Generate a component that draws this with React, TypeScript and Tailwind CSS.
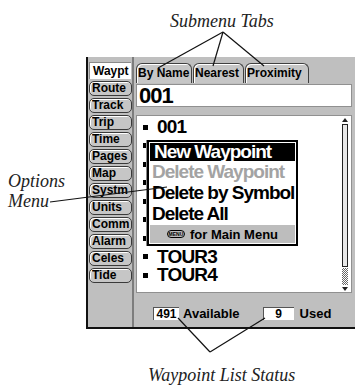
import React from 'react'

const sideTabs = ['Route', 'Track', 'Trip', 'Time', 'Pages', 'Map', 'Systm', 'Units', 'Comm', 'Alarm', 'Celes', 'Tide']

const topTabs = [
  { label: 'By Name', w: 'w-[56px]' },
  { label: 'Nearest', w: 'w-[51px]' },
  { label: 'Proximity', w: 'w-[64px]' },
]

// rows 1-6 sit under the options menu, only their bullets show
const waypoints = [
  { name: '001', hidden: false },
  { name: '002', hidden: true },
  { name: '003', hidden: true },
  { name: '004', hidden: true },
  { name: 'HOME', hidden: true },
  { name: 'TOUR1', hidden: true },
  { name: 'TOUR2', hidden: true },
  { name: 'TOUR3', hidden: false },
  { name: 'TOUR4', hidden: false },
]

const menuItems = [
  { label: 'Delete Waypoint', disabled: true },
  { label: 'Delete by Symbol', disabled: false },
  { label: 'Delete All', disabled: false },
]

const ScrollBar = () => (
  <svg className="absolute right-[2px] top-[2px]" width="8" height="174" viewBox="0 0 8 174">
    <defs>
      <pattern id="dith" width="2" height="2" patternUnits="userSpaceOnUse">
        <rect width="1" height="1" fill="#666" />
        <rect x="1" y="1" width="1" height="1" fill="#666" />
      </pattern>
    </defs>
    <polygon points="4,0 7,4 1,4" fill="#222" />
    <rect x="1.5" y="6.5" width="5" height="142" fill="#e8e8e8" stroke="#222" />
    <rect x="1" y="150" width="6" height="17" fill="url(#dith)" />
    <polygon points="1,169 7,169 4,173" fill="#222" />
  </svg>
)

const OptionsMenu = () => (
  <div className="absolute left-[10px] top-[24px] w-[151px] h-[106px] bg-white border-2 border-black shadow-[-1px_0_0_#888] flex flex-col">
    <div className="mx-[1px] mt-[1px] h-[18px] bg-black text-white text-[19px] font-bold tracking-[-1px] leading-[18px] pl-[4px] whitespace-nowrap">
      New Waypoint
    </div>
    {menuItems.map((m) => (
      <div
        key={m.label}
        className={`h-[21px] text-[19px] font-bold tracking-[-1px] leading-[21px] pl-[3px] whitespace-nowrap ${m.disabled ? 'text-[#a3a3a3]' : 'text-black'}`}
      >
        {m.label}
      </div>
    ))}
    <div className="mt-auto mx-[1px] mb-[1px] h-[18px] bg-[#bdbdbd] flex items-center justify-center gap-[5px]">
      <span className="inline-flex items-center justify-center w-[18px] h-[8px] rounded-[4px] border border-black text-[5px] font-bold leading-none">
        MENU
      </span>
      <span className="text-[13px] font-bold leading-none whitespace-nowrap">for Main Menu</span>
    </div>
  </div>
)

const Screen = () => (
  <div className="flex w-[269px] h-[272px] bg-[#bfbfbf] border-l-2 border-b-2 border-[#111] font-['Liberation_Sans',Arial,sans-serif] text-black">
    {/* left page tabs */}
    <div className="w-[46px] shrink-0 flex flex-col gap-[2px] pt-[5px] pl-[1px] border-r-2 border-[#7d7d7d]">
      <div className="h-[17px] w-[42px] bg-white border-t border-l border-[#8a8a8a] text-[12px] font-bold leading-[16px] pl-[3px]">
        Waypt
      </div>
      {sideTabs.map((t) => (
        <div
          key={t}
          className="h-[15px] w-[43px] rounded-[5px] border border-[#3a3a3a] bg-[#c6c6c6] shadow-[inset_1px_1px_0_#fff] text-[12px] font-bold leading-[13px] pl-[2px]"
        >
          {t}
        </div>
      ))}
    </div>

    {/* main */}
    <div className="flex-1 flex flex-col">
      <div className="h-[26px] flex items-end gap-[1px] pl-[2px]">
        {topTabs.map((t) => (
          <div
            key={t.label}
            className={`${t.w} h-[20px] rounded-t-[6px] border border-b-0 border-[#404040] bg-[#c6c6c6] shadow-[inset_1px_1px_0_#fff] text-[12px] font-bold leading-[19px] pl-[1px] whitespace-nowrap`}
          >
            {t.label}
          </div>
        ))}
      </div>
      <div className="mt-[1px] ml-[2px] mr-[3px] h-[23px] bg-white border border-[#909090] text-[22px] font-bold tracking-[-1px] leading-[22px] pl-[2px]">
        001
      </div>
      <div className="relative mt-[8px] ml-[2px] mr-[3px] h-[178px] bg-white border border-[#909090] pt-[2px]">
        {waypoints.map((w) => (
          <div key={w.name} className="h-[18.5px] flex items-center pl-[6px]">
            <span className="w-[5px] h-[5px] bg-black" />
            {!w.hidden && (
              <span className="ml-[9px] text-[19px] font-bold tracking-[-0.8px] leading-[18px]">{w.name}</span>
            )}
          </div>
        ))}
        <ScrollBar />
        <OptionsMenu />
      </div>
      <div className="flex-1 flex items-start pt-[14px] pl-[19px] text-[13px] font-bold">
        <div className="w-[26px] h-[13px] bg-white border-t border-l border-[#555] text-[12px] leading-[12px] text-center">491</div>
        <span className="ml-[4px] leading-[13px]">Available</span>
        <div className="ml-[23px] w-[31px] h-[13px] bg-white border-t border-l border-[#555] text-[12px] leading-[12px] text-center">9</div>
        <span className="ml-[6px] leading-[13px]">Used</span>
      </div>
    </div>
  </div>
)

export default function App() {
  return (
    <div className="relative w-[355px] h-[386px] bg-white overflow-hidden font-['Liberation_Serif',serif] italic text-[#222]">
      <div className="h-[57px] pt-[11px] pl-[170px] text-[18px] leading-[20px]">Submenu Tabs</div>
      <div className="flex">
        <div className="w-[86px] shrink-0 pt-[114px] pl-[8px] text-[18px] leading-[20px]">
          <div>Options</div>
          <div>Menu</div>
        </div>
        <div className="not-italic">
          <Screen />
        </div>
      </div>
      <div className="pt-[36px] pl-[148px] text-[18px] leading-[20px]">Waypoint List Status</div>

      {/* callout lines */}
      <svg className="absolute inset-0 pointer-events-none" width="355" height="386" viewBox="0 0 355 386">
        <g stroke="#111" strokeWidth="1.2" fill="none">
          <line x1="223" y1="32" x2="158" y2="68" />
          <line x1="223" y1="32" x2="213" y2="66" />
          <line x1="223" y1="32" x2="264" y2="66" />
          <line x1="50" y1="202" x2="167" y2="187" />
          <line x1="210" y1="352" x2="178" y2="318" />
          <line x1="210" y1="352" x2="265" y2="318" />
        </g>
      </svg>
    </div>
  )
}
